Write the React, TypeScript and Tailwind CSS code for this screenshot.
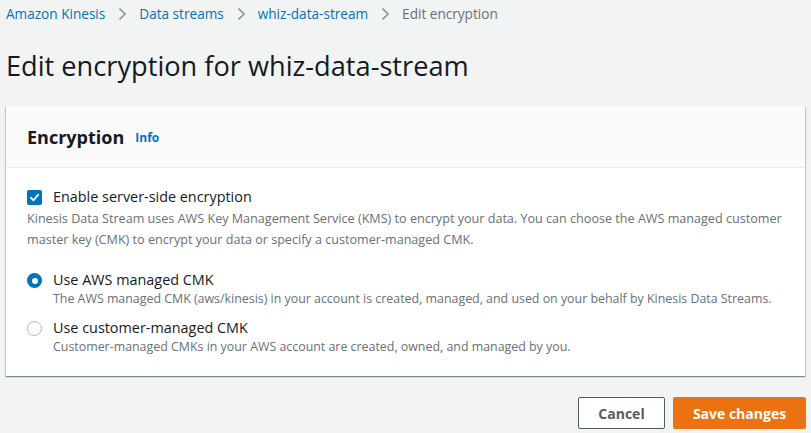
import React from "react";

const font = { fontFamily: '"Open Sans", "Noto Sans", Arial, sans-serif' };

function Chevron() {
  return (
    <svg width="16" height="16" viewBox="0 0 16 16" className="mx-[9px]">
      <path d="M5.5 2.5 L11 8 L5.5 13.5" fill="none" stroke="#879596" strokeWidth="1.6" />
    </svg>
  );
}

export default function App() {
  return (
    <div className="w-[811px] h-[433px] bg-[#f2f3f3] text-[#16191f] overflow-hidden" style={font}>
      <nav className="flex items-center pl-[6px] pt-[5px] h-[23px] text-[13.6px] leading-[20px]">
        <span className="text-[#0073bb]">Amazon Kinesis</span>
        <Chevron />
        <span className="text-[#0073bb]">Data streams</span>
        <Chevron />
        <span className="text-[#0073bb]">whiz-data-stream</span>
        <Chevron />
        <span className="text-[#687078]">Edit encryption</span>
      </nav>
      <h1 className="pl-[6px] mt-[25px] text-[27.2px] leading-[36px] font-normal">Edit encryption for whiz-data-stream</h1>
      <div className="mx-[6px] mt-[22px] bg-white shadow-[0_1px_1px_0_rgba(0,28,36,0.3),1px_1px_1px_0_rgba(0,28,36,0.15),-1px_1px_1px_0_rgba(0,28,36,0.15)]">
        <div className="h-[62px] bg-[#fafafa] border-b border-[#eaeded] flex items-center px-[21px]">
          <h2 className="text-[18px] font-bold leading-[24px]">Encryption</h2>
          <span className="ml-[11px] text-[12px] font-bold text-[#0073bb] mt-[2px]">Info</span>
        </div>
        <div className="px-[21px] pt-[19px] pb-[20px]">
          <div className="flex items-center gap-[11px]">
            <span className="w-[15px] h-[15px] rounded-[2px] bg-[#0073bb] flex items-center justify-center">
              <svg width="11" height="11" viewBox="0 0 12 12">
                <path d="M2 6.2 L5 9 L10 3" fill="none" stroke="white" strokeWidth="2" strokeLinecap="round" strokeLinejoin="round" />
              </svg>
            </span>
            <span className="text-[14.4px] leading-[20px]">Enable server-side encryption</span>
          </div>
          <p className="mt-[1px] text-[12.6px] leading-[21px] text-[#687078]">
            Kinesis Data Stream uses AWS Key Management Service (KMS) to encrypt your data. You can choose the AWS managed customer master key (CMK) to encrypt your data or specify a customer-managed CMK.
          </p>
          <div className="mt-[20px] flex gap-[11px]">
            <span className="mt-[3px] w-[15px] h-[15px] rounded-full bg-[#0073bb] flex items-center justify-center shrink-0">
              <span className="w-[6px] h-[6px] rounded-full bg-white" />
            </span>
            <div>
              <div className="text-[14.4px] leading-[20px]">Use AWS managed CMK</div>
              <div className="text-[12.4px] leading-[18px] text-[#687078]">The AWS managed CMK (aws/kinesis) in your account is created, managed, and used on your behalf by Kinesis Data Streams.</div>
            </div>
          </div>
          <div className="mt-[10px] flex gap-[11px]">
            <span className="mt-[3px] w-[15px] h-[15px] rounded-full border-[1.5px] border-[#aab7b8] bg-white shrink-0" />
            <div>
              <div className="text-[14.4px] leading-[20px]">Use customer-managed CMK</div>
              <div className="text-[12.4px] leading-[18px] text-[#687078]">Customer-managed CMKs in your AWS account are created, owned, and managed by you.</div>
            </div>
          </div>
        </div>
      </div>
      <div className="flex justify-end gap-[8px] pr-[5px] mt-[21px]">
        <button className="h-[32px] w-[87px] border border-[#545b64] rounded-[2px] bg-white text-[14px] font-bold text-[#545b64]">Cancel</button>
        <button className="h-[32px] w-[133px] rounded-[2px] bg-[#ec7211] text-[14px] font-bold text-white">Save changes</button>
      </div>
    </div>
  );
}
